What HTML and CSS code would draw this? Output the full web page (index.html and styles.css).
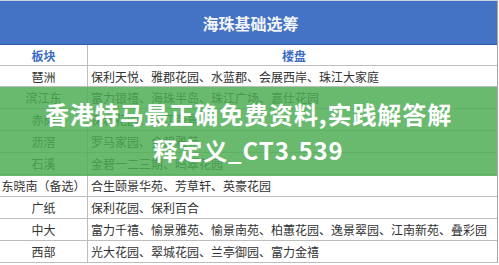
FILE: index.html
```html
<!DOCTYPE html>
<html lang="zh">
<head>
<meta charset="utf-8">
<link rel="stylesheet" href="styles.css">
</head>
<body>
<div class="page">
  <div class="sheet">
    <div class="title">海珠基础选筹</div>
    <div class="table">
      <div class="row head"><div class="c1">板块</div><div class="c2">楼盘</div></div>
      <div class="row short"><div class="c1">琶洲</div><div class="c2">保利天悦、雅郡花园、水蓝郡、会展西岸、珠江大家庭</div></div>
      <div class="row"><div class="c1">滨江东</div><div class="c2">富力银禧、海珠半岛、珠江广场、嘉仕花园</div></div>
      <div class="row"><div class="c1">赤岗</div><div class="c2">保利花园、珠江帝景</div></div>
      <div class="row"><div class="c1">沥滘</div><div class="c2">罗马家园、金碧雅苑</div></div>
      <div class="row"><div class="c1">石溪</div><div class="c2">金碧一二三期、鸣翠花园</div></div>
      <div class="row"><div class="c1">东晓南（备选）</div><div class="c2">合生颐景华苑、芳草轩、英豪花园</div></div>
      <div class="row"><div class="c1">广纸</div><div class="c2">保利花园、保利百合</div></div>
      <div class="row"><div class="c1">中大</div><div class="c2">富力千禧、愉景雅苑、愉景南苑、柏蕙花园、逸景翠园、江南新苑、叠彩园</div></div>
      <div class="row"><div class="c1">西部</div><div class="c2">光大花园、翠城花园、兰亭御园、富力金禧</div></div>
    </div>
  </div>
  <div class="overlay">
    <p class="headline">香港特马最正确免费资料,实践解答解<br>释定义_CT3.539</p>
  </div>
</div>
</body>
</html>
```

FILE: styles.css
```css
html, body {
  margin: 0;
  padding: 0;
  background: #ffffff;
}
.page {
  position: relative;
  width: 499px;
  height: 265px;
  overflow: hidden;
  font-family: "Noto Sans CJK SC", "Noto Sans", sans-serif;
}
.sheet {
  width: 497px;
  border-right: 1px solid #a8a8a8;
  border-top: 1px solid #c9d3e6;
}
.title {
  height: 44px;
  background: #4472c4;
  color: #f2f4f8;
  font-size: 16px;
  font-weight: 700;
  display: flex;
  align-items: center;
  justify-content: center;
  border-bottom: 1px solid #2f5aa8;
  box-sizing: border-box;
  padding-left: 4px;
}
.table {
  display: flex;
  flex-direction: column;
}
.row {
  display: grid;
  grid-template-columns: 88px 1fr;
  height: 22px;
  border-bottom: 1px solid #bdbdbd;
  box-sizing: border-box;
  font-size: 12px;
  color: #333333;
  line-height: 21px;
}
.row.head, .row.short {
  height: 21px;
}
.c1 {
  border-right: 1px solid #bdbdbd;
  text-align: center;
  white-space: nowrap;
}
.c2 {
  padding-left: 3px;
  white-space: nowrap;
  overflow: hidden;
}
.row.head .c1, .row.head .c2 {
  color: #3c6dc2;
  font-weight: 700;
  text-align: center;
}
.overlay {
  position: absolute;
  left: 0;
  top: 87px;
  width: 497px;
  height: 89px;
  background: rgba(76, 172, 84, 0.84);
  display: flex;
  align-items: center;
  justify-content: center;
}
.headline {
  margin: 0;
  color: #ffffff;
  font-size: 24px;
  font-weight: 700;
  line-height: 36px;
  text-align: center;
  letter-spacing: 0.9px;
}
```
